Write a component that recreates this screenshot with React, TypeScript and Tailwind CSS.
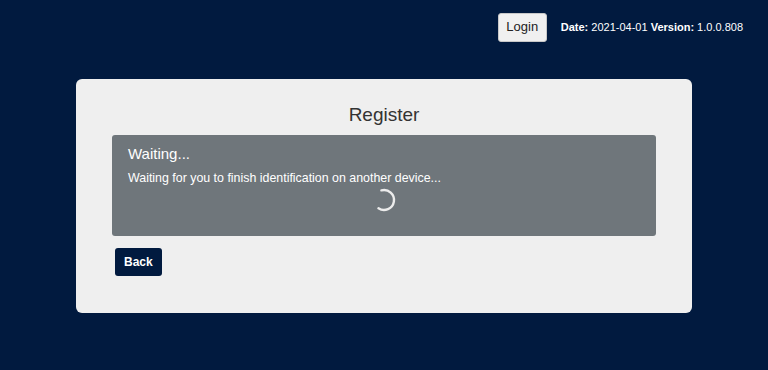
export default function App() {
  return (
    <div className="min-h-[370px] w-full bg-[#011a3f] font-['Liberation_Sans',Arial,sans-serif]">
      <div className="flex h-[53px] items-center justify-end pr-[25px] pt-[1px]">
        <button className="h-[29px] w-[49px] rounded-[3px] border border-[#c8c8c8] bg-[#f0f0f0] text-[13px] text-[#222]">
          Login
        </button>
        <div className="ml-[14px] text-[11px] text-white">
          <b>Date:</b> 2021-04-01 <b>Version:</b> 1.0.0.808
        </div>
      </div>
      <div className="mx-[76px] mt-[26px] h-[234px] rounded-[6px] bg-[#efefef] px-[36px] pt-[22px]">
        <h1 className="text-center text-[19px] leading-[28px] text-[#333]">Register</h1>
        <div className="mt-[6px] h-[101px] rounded-[3px] bg-[#6f767b] px-[16px] pt-[9px] text-white">
          <div className="text-[15px] leading-[20px]">Waiting...</div>
          <div className="mt-[7px] text-[12.4px] leading-[14px]">
            Waiting for you to finish identification on another device...
          </div>
          <div className="mt-[2px] flex justify-center">
            <svg width="26" height="26" viewBox="0 0 26 26">
              <path
                d="M13 3 A10 10 0 1 1 5.5 19.6"
                fill="none"
                stroke="#ececec"
                strokeWidth="2.4"
                strokeLinecap="round"
                transform="rotate(-15 13 13)"
              />
            </svg>
          </div>
        </div>
        <button className="ml-[3px] mt-[12px] h-[28px] rounded-[3px] bg-[#011a3f] px-[9px] text-[12px] font-bold text-white">
          Back
        </button>
      </div>
    </div>
  );
}
